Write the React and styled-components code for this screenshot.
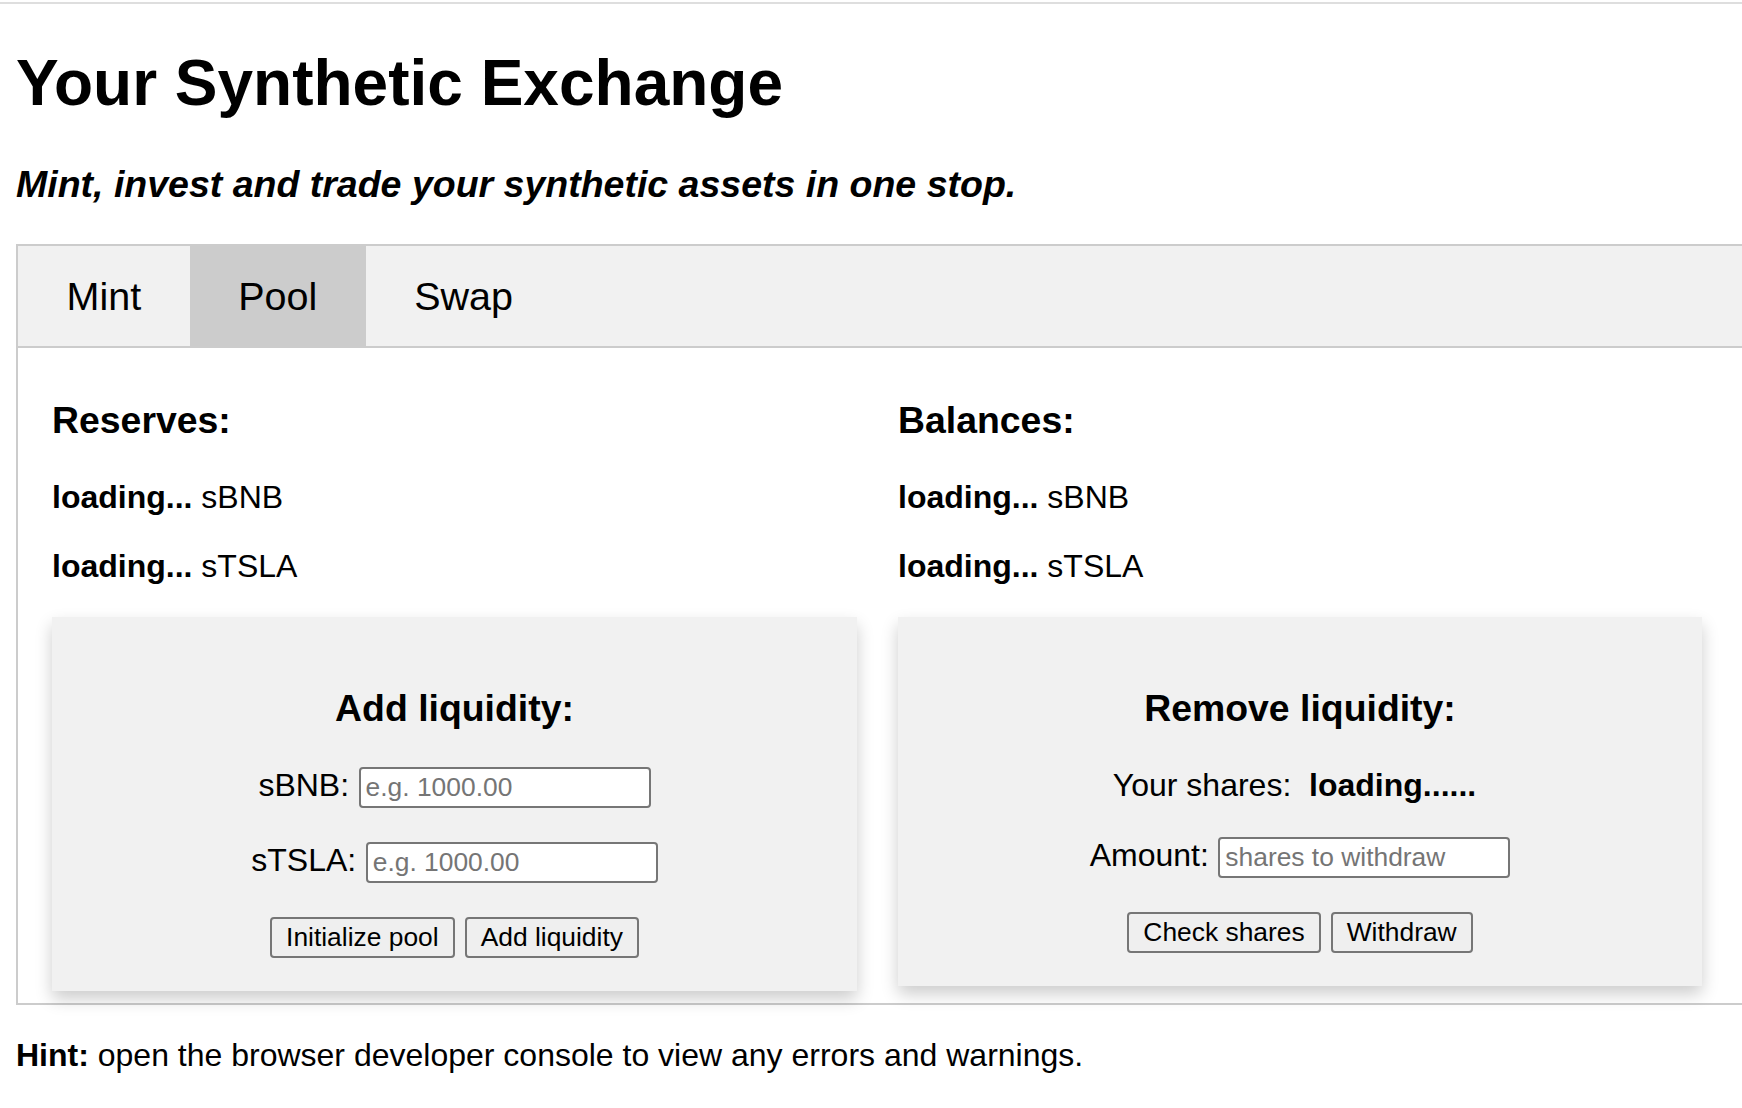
import React from "react";
import styled, { createGlobalStyle } from "styled-components";

const GlobalStyle = createGlobalStyle`
  html, body {
    margin: 0;
    padding: 0;
    overflow: hidden;
    background: #fff;
  }
  body {
    font-family: "Liberation Sans", Arial, Helvetica, sans-serif;
    color: #000;
  }
`;

const Page = styled.div`
  padding: 0 16px;
  font-size: 32px;
`;

const TopRule = styled.div`
  height: 2px;
  margin: 2px -16px 0;
  background: #dedede;
`;

const Title = styled.h1`
  font-size: 64px;
  font-weight: bold;
  line-height: 73px;
  margin: 43px 0 0;
`;

const Tagline = styled.h3`
  font-size: 37.5px;
  font-weight: bold;
  font-style: italic;
  line-height: 43px;
  margin: 43px 0 38px;
`;

const TabBar = styled.div`
  display: flex;
  box-sizing: border-box;
  width: 1804px;
  border: 2px solid #ccc;
  background: #f1f1f1;
`;

const TabButton = styled.button`
  padding: 27px 48.5px;
  border: none;
  outline: none;
  background: ${(p) => (p.$active ? "#ccc" : "inherit")};
  color: #000;
  font-family: "Liberation Sans", Arial, sans-serif;
  font-size: 39.5px;
  line-height: 46px;
  cursor: pointer;
`;

const TabPanel = styled.div`
  box-sizing: border-box;
  width: 1804px;
  border: 2px solid #ccc;
  border-top: none;
  padding: 14px 0 12px 34px;
  display: grid;
  grid-template-columns: 805px 804px;
  column-gap: 41px;
  align-items: start;
`;

const Column = styled.div``;

const SectionTitle = styled.h3`
  font-size: 37.4px;
  font-weight: bold;
  line-height: 43px;
  margin: 37px 0;
`;

const Line = styled.p`
  line-height: 37px;
  margin: 32px 0;
`;

const Card = styled.div`
  background: #f1f1f1;
  box-shadow: 0 8px 16px 0 rgba(0, 0, 0, 0.2);
  padding: 33px 32px;
  text-align: center;
`;

const Field = styled.div`
  display: flex;
  justify-content: center;
  align-items: baseline;
  gap: 9.5px;
  margin-bottom: 34px;
`;

const InfoRow = styled.div`
  line-height: 37px;
  margin-bottom: 33px;
  padding-right: 11px;
`;

const AmountInput = styled.input`
  box-sizing: border-box;
  width: 292px;
  height: 41px;
  padding: 0 5px;
  border: 2px solid #767676;
  border-radius: 4px;
  background: #fff;
  font-family: "Liberation Sans", Arial, sans-serif;
  font-size: 26.4px;
  color: #000;

  &::placeholder {
    color: #757575;
  }
`;

const ButtonRow = styled.div`
  display: flex;
  justify-content: center;
  gap: 10px;
`;

const ActionButton = styled.button`
  height: 41px;
  padding: 0 14px;
  border: 2px solid #767676;
  border-radius: 4px;
  background: #efefef;
  color: #000;
  font-family: "Liberation Sans", Arial, sans-serif;
  font-size: 26.4px;
  cursor: pointer;
`;

const Hint = styled.p`
  line-height: 37px;
  margin: 32px 0;
`;

const tabs = ["Mint", "Pool", "Swap"];
const tokens = ["sBNB", "sTSLA"];

const App = () => {
  return (
    <>
      <GlobalStyle />
      <Page>
        <TopRule />
        <Title>Your Synthetic Exchange</Title>
        <Tagline>Mint, invest and trade your synthetic assets in one stop.</Tagline>

        <TabBar>
          {tabs.map((t) => (
            <TabButton key={t} $active={t === "Pool"}>
              {t}
            </TabButton>
          ))}
        </TabBar>

        <TabPanel>
          <Column>
            <SectionTitle>Reserves:</SectionTitle>
            {tokens.map((t) => (
              <Line key={t}>
                <b>loading...</b> {t}
              </Line>
            ))}
            <Card>
              <SectionTitle>Add liquidity:</SectionTitle>
              {tokens.map((t) => (
                <Field key={t}>
                  <span>{t}:</span>
                  <AmountInput placeholder="e.g. 1000.00" />
                </Field>
              ))}
              <ButtonRow>
                <ActionButton>Initialize pool</ActionButton>
                <ActionButton>Add liquidity</ActionButton>
              </ButtonRow>
            </Card>
          </Column>

          <Column>
            <SectionTitle>Balances:</SectionTitle>
            {tokens.map((t) => (
              <Line key={t}>
                <b>loading...</b> {t}
              </Line>
            ))}
            <Card>
              <SectionTitle>Remove liquidity:</SectionTitle>
              <InfoRow>
                Your shares:{"\u00a0 "}
                <b>loading......</b>
              </InfoRow>
              <Field>
                <span>Amount:</span>
                <AmountInput placeholder="shares to withdraw" />
              </Field>
              <ButtonRow>
                <ActionButton>Check shares</ActionButton>
                <ActionButton>Withdraw</ActionButton>
              </ButtonRow>
            </Card>
          </Column>
        </TabPanel>

        <Hint>
          <b>Hint:</b> open the browser developer console to view any errors and warnings.
        </Hint>
      </Page>
    </>
  );
};

export default App;
